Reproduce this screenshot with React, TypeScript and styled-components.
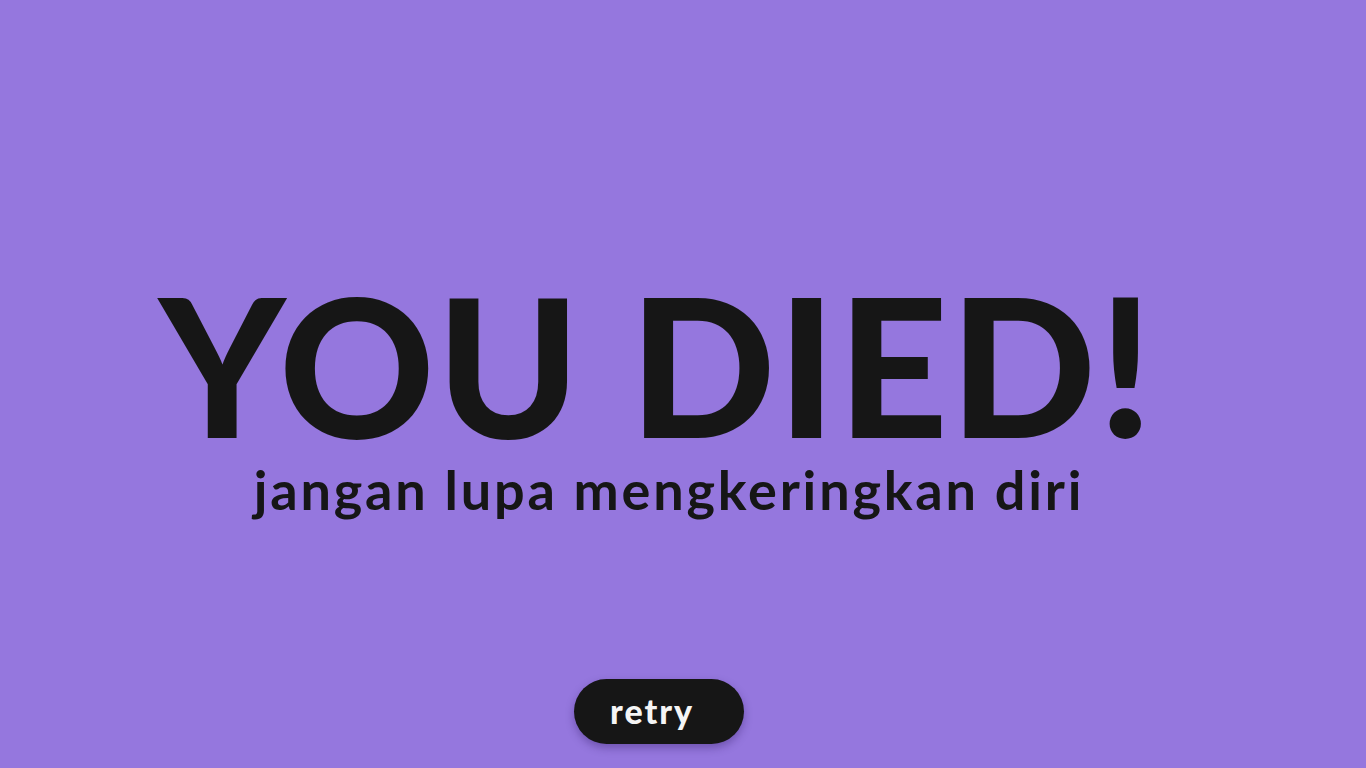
import React from "react";
import styled, { createGlobalStyle } from "styled-components";

const Global = createGlobalStyle`
  html, body { margin: 0; padding: 0; }
  body { background: #9577de; font-family: "Nunito", "Lato", "Open Sans", sans-serif; }
`;

const Screen = styled.main`
  width: 1366px;
  height: 768px;
  display: flex;
  flex-direction: column;
  align-items: center;
  background: #9577de;
  color: #161616;
  overflow: hidden;
`;

const Title = styled.h1`
  margin: 274px 52px 0 0;
  font-family: "Lato", sans-serif;
  font-weight: 900;
  font-size: 192px;
  line-height: 180px;
  letter-spacing: 2px;
  white-space: nowrap;
`;

const Subtitle = styled.p`
  margin: 6px 28px 0 0;
  font-family: "Lato", sans-serif;
  font-weight: 700;
  font-size: 54px;
  line-height: 60px;
  letter-spacing: 2.8px;
  white-space: nowrap;
`;

const RetryButton = styled.button`
  margin: 159px 48px 0 0;
  width: 170px;
  height: 65px;
  border: none;
  border-radius: 33px;
  background: #161616;
  color: #f5f5f5;
  font-family: "Lato", sans-serif;
  font-weight: 900;
  font-size: 34px;
  letter-spacing: 2px;
  text-align: left;
  padding: 0 0 2px 36px;
  box-shadow: 0 4px 8px rgba(40, 20, 90, 0.35);
  cursor: pointer;
`;

export default function App() {
  return (
    <>
      <Global />
      <Screen>
        <Title>YOU DIED!</Title>
        <Subtitle>jangan lupa mengkeringkan diri</Subtitle>
        <RetryButton>retry</RetryButton>
      </Screen>
    </>
  );
}
